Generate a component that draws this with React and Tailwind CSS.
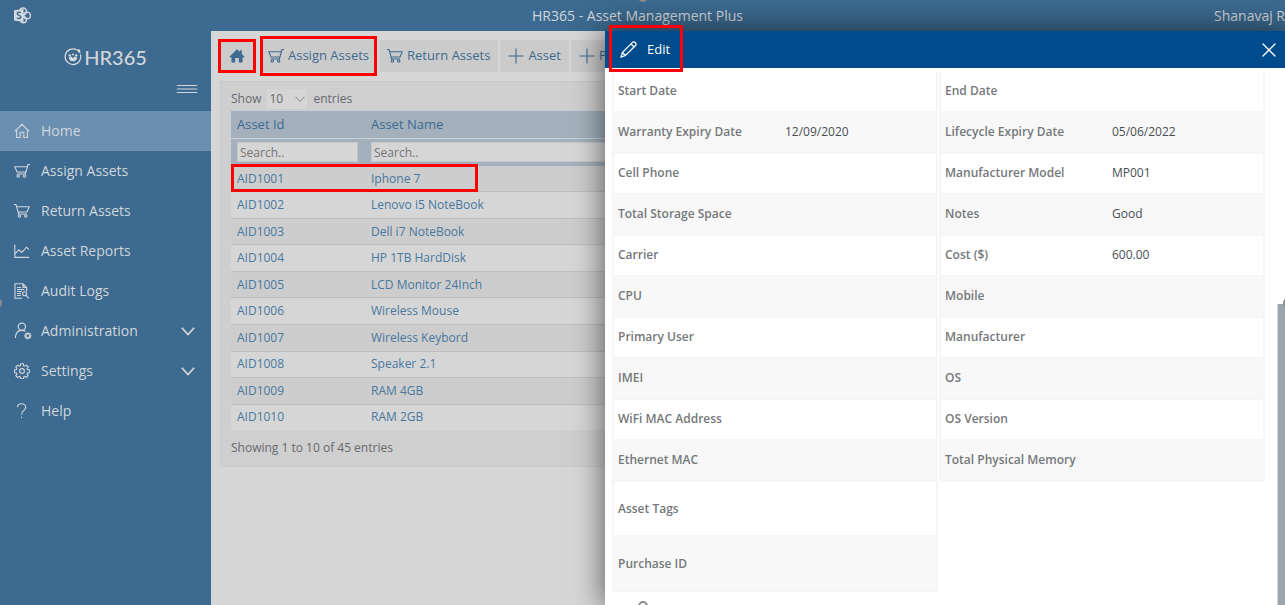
import React from "react";
import { Menu, X } from "lucide-react";

function Icon({ children, className = "h-4 w-4", width = 1.1 }) {
  return (
    <svg
      viewBox="0 0 16 16"
      className={`${className} shrink-0`}
      fill="none"
      stroke="currentColor"
      strokeWidth={width}
      aria-hidden="true"
    >
      {children}
    </svg>
  );
}

const HomeOutline = () => (
  <Icon>
    <path d="M.8 8.3 8 1.3l7.2 7M2.6 6.8v7.7h3.6V9.3h3.6v5.2h3.6V6.8" />
  </Icon>
);

const HomeSolid = () => (
  <svg viewBox="0 0 16 16" className="h-4 w-4" fill="currentColor" aria-hidden="true">
    <path d="M8 1.2 10.800 4V2.200h2v3.800L15.500 8.800l-1 1-1-.9v5.600H9.800V10H6.200v4.500H2.500V8.900l-1 .9-1-1z" />
  </svg>
);

const AssignCart = (props) => (
  <Icon {...props}>
    <path d="M16 1.5h-2L11.4 11H3M13.2 3.8H.8L3 9h9" />
    <circle cx="4.2" cy="13" r="1.2" />
    <circle cx="10.6" cy="13" r="1.2" />
  </Icon>
);

const ReturnCart = (props) => (
  <Icon {...props}>
    <path d="M0 1.5h2L4.6 11H13M2.8 3.8h12.4L13 9H4" />
    <circle cx="5.4" cy="13" r="1.2" />
    <circle cx="11.8" cy="13" r="1.2" />
  </Icon>
);

const ReportIcon = () => (
  <Icon>
    <path d="M.8 1.5v12.900h14.400M1 11l3.800-4.200 2.800 2.600 5-5.200 2.400 2.400" />
  </Icon>
);

const AuditIcon = () => (
  <Icon>
    <path d="M8 15.2H1V.8h8l3.6 3.6v4M9 .8v3.6h3.6M3 4.5h4M3 6.5h7.5M3 8.5h5M3 10.5h4M3 12.5h4" />
    <circle cx="10.6" cy="10.8" r="2" />
    <path d="m12 12.3 3 3" />
  </Icon>
);

const AdminIcon = () => (
  <Icon className="h-[18px] w-[18px]">
    <circle cx="7" cy="4.2" r="3.2" />
    <path d="M1.2 14.2C1.4 10 3.6 7.5 7 7.5c1.2 0 2.2.3 3 .9" />
    <circle cx="12.3" cy="12.3" r="1.9" strokeWidth="1.3" />
    <path d="M12.3 9v1.4M12.3 14.2v1.4M9 12.3h1.4M14.2 12.3h1.4M10 10l1 1M13.6 13.6l1 1M14.6 10l-1 1M11 13.6l-1 1" />
  </Icon>
);

const GearIcon = () => (
  <Icon>
    <circle cx="8" cy="8" r="2.4" />
    <path d="M6.700.8h2.600l.4 2 1 .4 1.700-1.100 1.800 1.800-1.100 1.700.4 1 2 .4v2.600l-2 .4-.4 1 1.100 1.700-1.800 1.800-1.700-1.100-1 .4-.4 2H6.700l-.4-2-1-.4-1.700 1.100-1.800-1.800 1.100-1.700-.4-1-2-.4V7l2-.4.4-1-1.100-1.700 1.800-1.800 1.700 1.100 1-.4z" />
  </Icon>
);

const HelpIcon = () => (
  <Icon>
    <path d="M3.500 4.200C3.500 2 5.300.8 7.500.8s4.200 1.400 4.200 3.500c0 3.200-4.200 3.500-4.200 7.200" />
    <path d="M7.500 13.800v1.400" />
  </Icon>
);

const Chevron = ({ className, width = 2 }) => (
  <Icon className={className} width={width}>
    <path d="m1 4.500 7 7.500 7-7.500" />
  </Icon>
);

const PlusIcon = () => (
  <Icon>
    <path d="M8 .5v15M.5 8h15" />
  </Icon>
);

const PencilIcon = () => (
  <Icon className="h-[17px] w-[17px]" width={1.2}>
    <path d="M1 15l1.200-4.200L11.500 1.500a1.900 1.900 0 0 1 2.900 0 1.900 1.900 0 0 1 0 2.900L5.100 13.700zM10.300 2.700l2.900 2.900M2.200 10.800l2.900 2.900" />
  </Icon>
);

const SharePointLogo = () => (
  <svg viewBox="0 0 18 17" className="h-[17px] w-[18px]" aria-hidden="true">
    <g fill="none" stroke="#d5d9de" strokeWidth="1.400">
      <circle cx="9" cy="4.500" r="3.500" />
      <circle cx="13" cy="8.500" r="3.400" />
      <circle cx="9.500" cy="12.800" r="3" />
    </g>
    <path d="M0 3.200 9.500 2v13L0 13.600z" fill="#d5d9de" />
    <path
      d="M6.800 5.700C5.500 4.900 3.200 5 3.200 6.700c0 1.900 3.700 1.300 3.700 3.300 0 1.800-2.500 1.800-4 .8"
      fill="none"
      stroke="#3c6a90"
      strokeWidth="1.400"
    />
  </svg>
);

const BrandLogo = () => (
  <svg viewBox="0 0 18 18" className="h-[18px] w-[18px]" aria-hidden="true">
    <path
      d="M12.500 1.800A7.800 7.800 0 1 0 16.400 6.500"
      fill="none"
      stroke="#dadada"
      strokeWidth="1.200"
    />
    <path d="m11.800 1.200 4.200.2.600 4.400-2-1.600z" fill="#dadada" />
    <circle cx="5.800" cy="7.400" r="1.200" fill="#dadada" />
    <circle cx="9" cy="6.600" r="1" fill="#dadada" />
    <circle cx="12.200" cy="7.400" r="1.200" fill="#dadada" />
    <path d="M5 9.200 7.300 8.600 9 10.200l1.700-1.600 2.300.6c.3 2.200-1 4-4 4s-4.300-1.800-4-4z" fill="#dadada" />
  </svg>
);

const navItems = [
  { label: "Home", icon: HomeOutline, active: true },
  { label: "Assign Assets", icon: AssignCart },
  { label: "Return Assets", icon: ReturnCart },
  { label: "Asset Reports", icon: ReportIcon },
  { label: "Audit Logs", icon: AuditIcon },
  { label: "Administration", icon: AdminIcon, expandable: true },
  { label: "Settings", icon: GearIcon, expandable: true },
  { label: "Help", icon: HelpIcon },
];

const assets = [
  ["AID1001", "Iphone 7"],
  ["AID1002", "Lenovo i5 NoteBook"],
  ["AID1003", "Dell i7 NoteBook"],
  ["AID1004", "HP 1TB HardDisk"],
  ["AID1005", "LCD Monitor 24Inch"],
  ["AID1006", "Wireless Mouse"],
  ["AID1007", "Wireless Keybord"],
  ["AID1008", "Speaker 2.1"],
  ["AID1009", "RAM 4GB"],
  ["AID1010", "RAM 2GB"],
];

const leftDetails = [
  ["Start Date", ""],
  ["Warranty Expiry Date", "12/09/2020"],
  ["Cell Phone", ""],
  ["Total Storage Space", ""],
  ["Carrier", ""],
  ["CPU", ""],
  ["Primary User", ""],
  ["IMEI", ""],
  ["WiFi MAC Address", ""],
  ["Ethernet MAC", ""],
  ["Asset Tags", "", true],
  ["Purchase ID", "", true],
];

const rightDetails = [
  ["End Date", ""],
  ["Lifecycle Expiry Date", "05/06/2022"],
  ["Manufacturer Model", "MP001"],
  ["Notes", "Good"],
  ["Cost ($)", "600.00"],
  ["Mobile", ""],
  ["Manufacturer", ""],
  ["OS", ""],
  ["OS Version", ""],
  ["Total Physical Memory", ""],
];

function Highlight({ className }) {
  return (
    <span
      className={`pointer-events-none absolute border-3 border-[#fe0000] ${className}`}
    />
  );
}

function Header() {
  return (
    <header className="grid h-[31px] shrink-0 grid-cols-[1fr_auto_1fr] items-center bg-[#3c6a90] pr-2.5 text-[#d2d6da]">
      <a href="#sharepoint" aria-label="SharePoint" className="ml-3.5">
        <SharePointLogo />
      </a>
      <h1 className="text-sm">HR365 - Asset Management Plus</h1>
      <span className="-mr-2.5 justify-self-end text-sm whitespace-nowrap">
        Shanavaj R
      </span>
    </header>
  );
}

function Sidebar() {
  return (
    <aside className="flex w-[211px] shrink-0 flex-col bg-[#3c6a90] text-[#d2d6da]">
      <div className="flex h-[52px] items-center justify-center gap-0.5">
        <BrandLogo />
        <span className="font-[Lato,sans-serif] text-xl font-medium">HR365</span>
      </div>
      <button
        aria-label="Toggle navigation"
        className="mr-2.5 mb-4 self-end"
      >
        <Menu className="h-3 w-7" strokeWidth={2} preserveAspectRatio="none" />
      </button>
      <nav>
        {navItems.map(({ label, icon: Glyph, active, expandable }) => (
          <a
            key={label}
            href="#nav"
            className={`flex h-10 items-center px-3.5 text-sm ${active ? "bg-[#6a8fb1]" : ""}`}
          >
            <span className="flex w-[27px]">
              <Glyph />
            </span>
            <span className="grow">{label}</span>
            {expandable && <Chevron className="mr-0.5 h-3.5 w-3.5" />}
          </a>
        ))}
      </nav>
    </aside>
  );
}

function Toolbar() {
  const base = "relative flex h-8 shrink-0 items-center gap-1 bg-[#cbcbcb] px-2";
  return (
    <div className="flex gap-0.5 text-[13px] text-[#3c6a90]">
      <button aria-label="Home" className={`${base} mr-1 w-[34px] justify-center`}>
        <HomeSolid />
        <Highlight className="-inset-x-0.5 -inset-y-px" />
      </button>
      <button className={base}>
        <AssignCart />
        Assign Assets
        <Highlight className="inset-x-0 -inset-y-1" />
      </button>
      <button className={base}>
        <ReturnCart />
        Return Assets
      </button>
      <button className={base}>
        <PlusIcon />
        Asset
      </button>
      <button className={base}>
        <PlusIcon />
        P
      </button>
    </div>
  );
}

function AssetTable() {
  return (
    <section className="mt-[9px] border border-[#c9c9c9] bg-[#cfcfcf] pt-1.5 pl-2.5 text-xs text-[#666a70]">
      <div className="mb-0.5 flex h-[21px] items-center gap-1.5">
        <label htmlFor="page-size">Show</label>
        <span className="relative flex items-center bg-[#d5d5d5]">
          <select
            id="page-size"
            defaultValue="10"
            className="h-5 w-10 appearance-none pl-0.5"
          >
            <option>10</option>
            <option>25</option>
            <option>50</option>
          </select>
          <span className="pointer-events-none absolute right-0.5">
            <Chevron className="h-2.5 w-2.5" width={1.200} />
          </span>
        </span>
        <span>entries</span>
      </div>
      <table className="h-[319px] w-full table-fixed border-collapse text-left text-xs text-[#4878a0]">
        <thead className="bg-[#a4b1bc]">
          <tr className="h-[27px] border-b border-[#c9d0d6] text-[13px] text-[#3c6a90]">
            <th className="w-[134px] px-1.5 font-normal">Asset Id</th>
            <th className="px-1.5 font-normal">Asset Name</th>
          </tr>
          <tr className="h-7">
            <th className="px-1.5">
              <input
                aria-label="Search asset id"
                placeholder="Search.."
                className="block h-5 w-[121px] border border-[#c4c8cc] bg-[#d6d6d6] px-0.5 font-normal placeholder:text-[#757575]"
              />
            </th>
            <th className="px-1.5">
              <input
                aria-label="Search asset name"
                placeholder="Search.."
                className="block h-5 w-full border border-[#c4c8cc] bg-[#d6d6d6] px-0.5 font-normal placeholder:text-[#757575]"
              />
            </th>
          </tr>
        </thead>
        <tbody>
          {assets.map(([id, name], i) => (
            <tr
              key={id}
              className="relative border-b border-[#bfbfbf] odd:bg-[#cdcdcd] even:bg-[#d6d6d6] last:border-0"
            >
              <td className="px-1.5">
                {id}
                {i === 0 && (
                  <Highlight className="-top-0.5 -bottom-px left-0 w-[247px]" />
                )}
              </td>
              <td className="px-1.5">{name}</td>
            </tr>
          ))}
        </tbody>
      </table>
      <p className="py-2 leading-5">Showing 1 to 10 of 45 entries</p>
    </section>
  );
}

function DetailList({ rows }) {
  return (
    <dl className="flex-1 self-start">
      {rows.map(([label, value, tall]) => (
        <div
          key={label}
          className={`flex items-center border-x-2 border-b-2 border-[#f6f6f6] px-1 text-xs odd:bg-white even:bg-[#f8f8f8] ${tall ? "h-[55px]" : "h-[41px] pb-0.5"}`}
        >
          <dt className="w-[167px] font-semibold text-[#75787b]">{label}</dt>
          <dd className="text-[#484e54]">{value}</dd>
        </div>
      ))}
    </dl>
  );
}

function DetailDrawer() {
  return (
    <section
      aria-label="Asset details"
      className="absolute top-[31px] right-0 bottom-0 flex w-[680px] max-w-full flex-col bg-white shadow-[0_0_28px_2px_rgba(0,0,0,0.55)]"
    >
      <div className="flex h-[37px] shrink-0 items-center justify-between bg-[#004b8b] pr-1 pl-2 text-white">
        <button className="relative flex h-full items-center gap-2.5 px-[7px] text-[13px]">
          <PencilIcon />
          Edit
          <Highlight className="-top-1.5 -right-1.5 -bottom-1 -left-1" />
        </button>
        <button aria-label="Close">
          <X className="h-6 w-6" strokeWidth={1.300} />
        </button>
      </div>
      <div className="flex min-h-0 grow overflow-hidden pl-[7px]">
        <div className="flex grow gap-px pt-1">
          <DetailList rows={leftDetails} />
          <DetailList rows={rightDetails} />
        </div>
        <div className="ml-3 flex w-2 flex-col justify-end">
          <div className="h-14/25 border-l border-[#c9d6df] bg-[#9aa5ae]" />
        </div>
      </div>
    </section>
  );
}

function Handle({ className }) {
  return (
    <span
      className={`absolute h-2.5 w-2.5 rounded-full border-2 border-[#8c8c8c] bg-white ${className}`}
    />
  );
}

export default function App() {
  return (
    <div className="relative flex h-screen flex-col overflow-hidden bg-[#d6d6d6] font-['Open_Sans',sans-serif]">
      <Header />
      <div className="flex min-h-0 grow">
        <Sidebar />
        <main className="min-w-0 grow overflow-hidden pt-[9px] pl-[9px]">
          <Toolbar />
          <AssetTable />
        </main>
      </div>
      <DetailDrawer />
      <Handle className="top-1/2 -left-2 -translate-y-1/2" />
      <Handle className="top-1/2 -right-2 -translate-y-1/2" />
      <Handle className="-top-2 left-1/2 -translate-x-1/2" />
      <Handle className="-bottom-1.5 left-1/2 -translate-x-1/2" />
    </div>
  );
}
